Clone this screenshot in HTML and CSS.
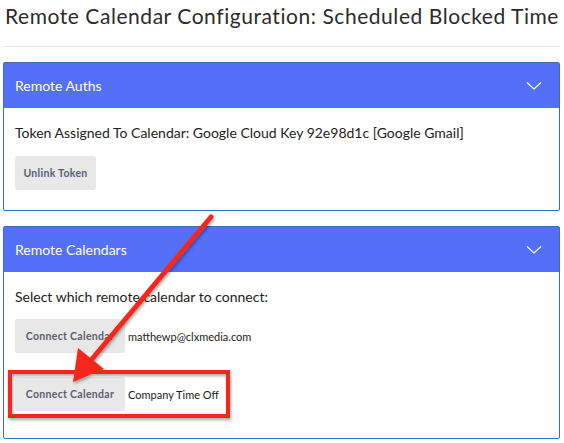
FILE: index.html
```html
<!DOCTYPE html>
<html lang="en">
<head>
    <meta charset="UTF-8">
    <meta name="viewport" content="width=device-width, initial-scale=1.0">
    <title>Remote Calendar Configuration</title>
    <link rel="stylesheet" href="styles.css">
</head>
<body>
    <div class="page">
        <h1 class="page-title">Remote Calendar Configuration: Scheduled Blocked Time</h1>
        <hr class="divider">

        <section class="panel">
            <div class="panel-head">
                <span>Remote Auths</span>
                <svg class="chevron" width="16" height="10" viewBox="0 0 16 10"><path d="M1 1.5 L8 8 L15 1.5" fill="none" stroke="#fff" stroke-width="1.2"/></svg>
            </div>
            <div class="panel-body">
                <p class="panel-text">Token Assigned To Calendar: Google Cloud Key 92e98d1c [Google Gmail]</p>
                <button class="btn">Unlink Token</button>
            </div>
        </section>

        <section class="panel panel-calendars">
            <div class="panel-head">
                <span>Remote Calendars</span>
                <svg class="chevron" width="16" height="10" viewBox="0 0 16 10"><path d="M1 1.5 L8 8 L15 1.5" fill="none" stroke="#fff" stroke-width="1.2"/></svg>
            </div>
            <div class="panel-body">
                <p class="panel-text">Select which remote calendar to connect:</p>
                <div class="cal-row">
                    <button class="btn btn-wide">Connect Calendar</button>
                    <span class="cal-name">matthewp@clxmedia.com</span>
                </div>
                <div class="cal-row cal-row-last">
                    <button class="btn btn-wide">Connect Calendar</button>
                    <span class="cal-name">Company Time Off</span>
                </div>
            </div>
        </section>
    </div>

    <!-- annotation drawn over the screenshot -->
    <svg class="annotation" width="564" height="443" viewBox="0 0 564 443">
        <defs>
            <filter id="shadow" x="-20%" y="-20%" width="140%" height="140%">
                <feDropShadow dx="1" dy="2" stdDeviation="1.5" flood-color="#000" flood-opacity="0.35"/>
            </filter>
        </defs>
        <g filter="url(#shadow)">
            <rect x="10" y="372" width="218" height="44" fill="none" stroke="#f5281c" stroke-width="4"/>
            <line x1="211" y1="217" x2="92" y2="359" stroke="#f5281c" stroke-width="5" stroke-linecap="round"/>
            <polygon points="73,382 78,348 104,369" fill="#f5281c"/>
        </g>
    </svg>
</body>
</html>
```

FILE: styles.css
```css
body {
    margin: 0;
    padding: 0;
    background: #fff;
    font-family: Lato, "Open Sans", sans-serif;
    color: #222;
}

.page {
    padding: 0 4px 0 3px;
}

.page-title {
    margin: 0;
    padding: 3px 0 0 2px;
    font-size: 21px;
    font-weight: 400;
    line-height: 26px;
    letter-spacing: 0.55px;
    color: #2b2b2b;
    white-space: nowrap;
}

.divider {
    margin: 17px 0 15px;
    border: none;
    border-top: 1px solid #e6e6e6;
}

.panel {
    border: 1px solid #3a6db3;
    border-radius: 2px;
    margin-bottom: 15px;
}

.panel-head {
    display: flex;
    align-items: center;
    justify-content: space-between;
    height: 45px;
    padding: 0 17px 0 11px;
    background: #546ff8;
    color: #fff;
    font-size: 14px;
}

.chevron {
    display: block;
}

.panel-body {
    padding: 16px 11px 20px;
}

.panel-text {
    margin: 0 0 14px;
    font-size: 14px;
    line-height: 18px;
    color: #222;
}

.btn {
    display: block;
    width: 81px;
    height: 34px;
    padding: 0;
    border: none;
    border-radius: 3px;
    background: #e8e8e8;
    color: #5a5e72;
    font-family: inherit;
    font-size: 10.5px;
    font-weight: 700;
    letter-spacing: 0.3px;
    white-space: nowrap;
}

.btn-wide {
    width: 110px;
}

.cal-row {
    display: flex;
    align-items: center;
    gap: 3px;
    margin-bottom: 24px;
}

.cal-row .cal-name {
    font-size: 11px;
    color: #222;
}

.cal-row-last {
    margin-bottom: 7px;
}

.panel-calendars .panel-text {
    margin-bottom: 13px;
}

.annotation {
    position: absolute;
    top: 0;
    left: 0;
    pointer-events: none;
}
```
